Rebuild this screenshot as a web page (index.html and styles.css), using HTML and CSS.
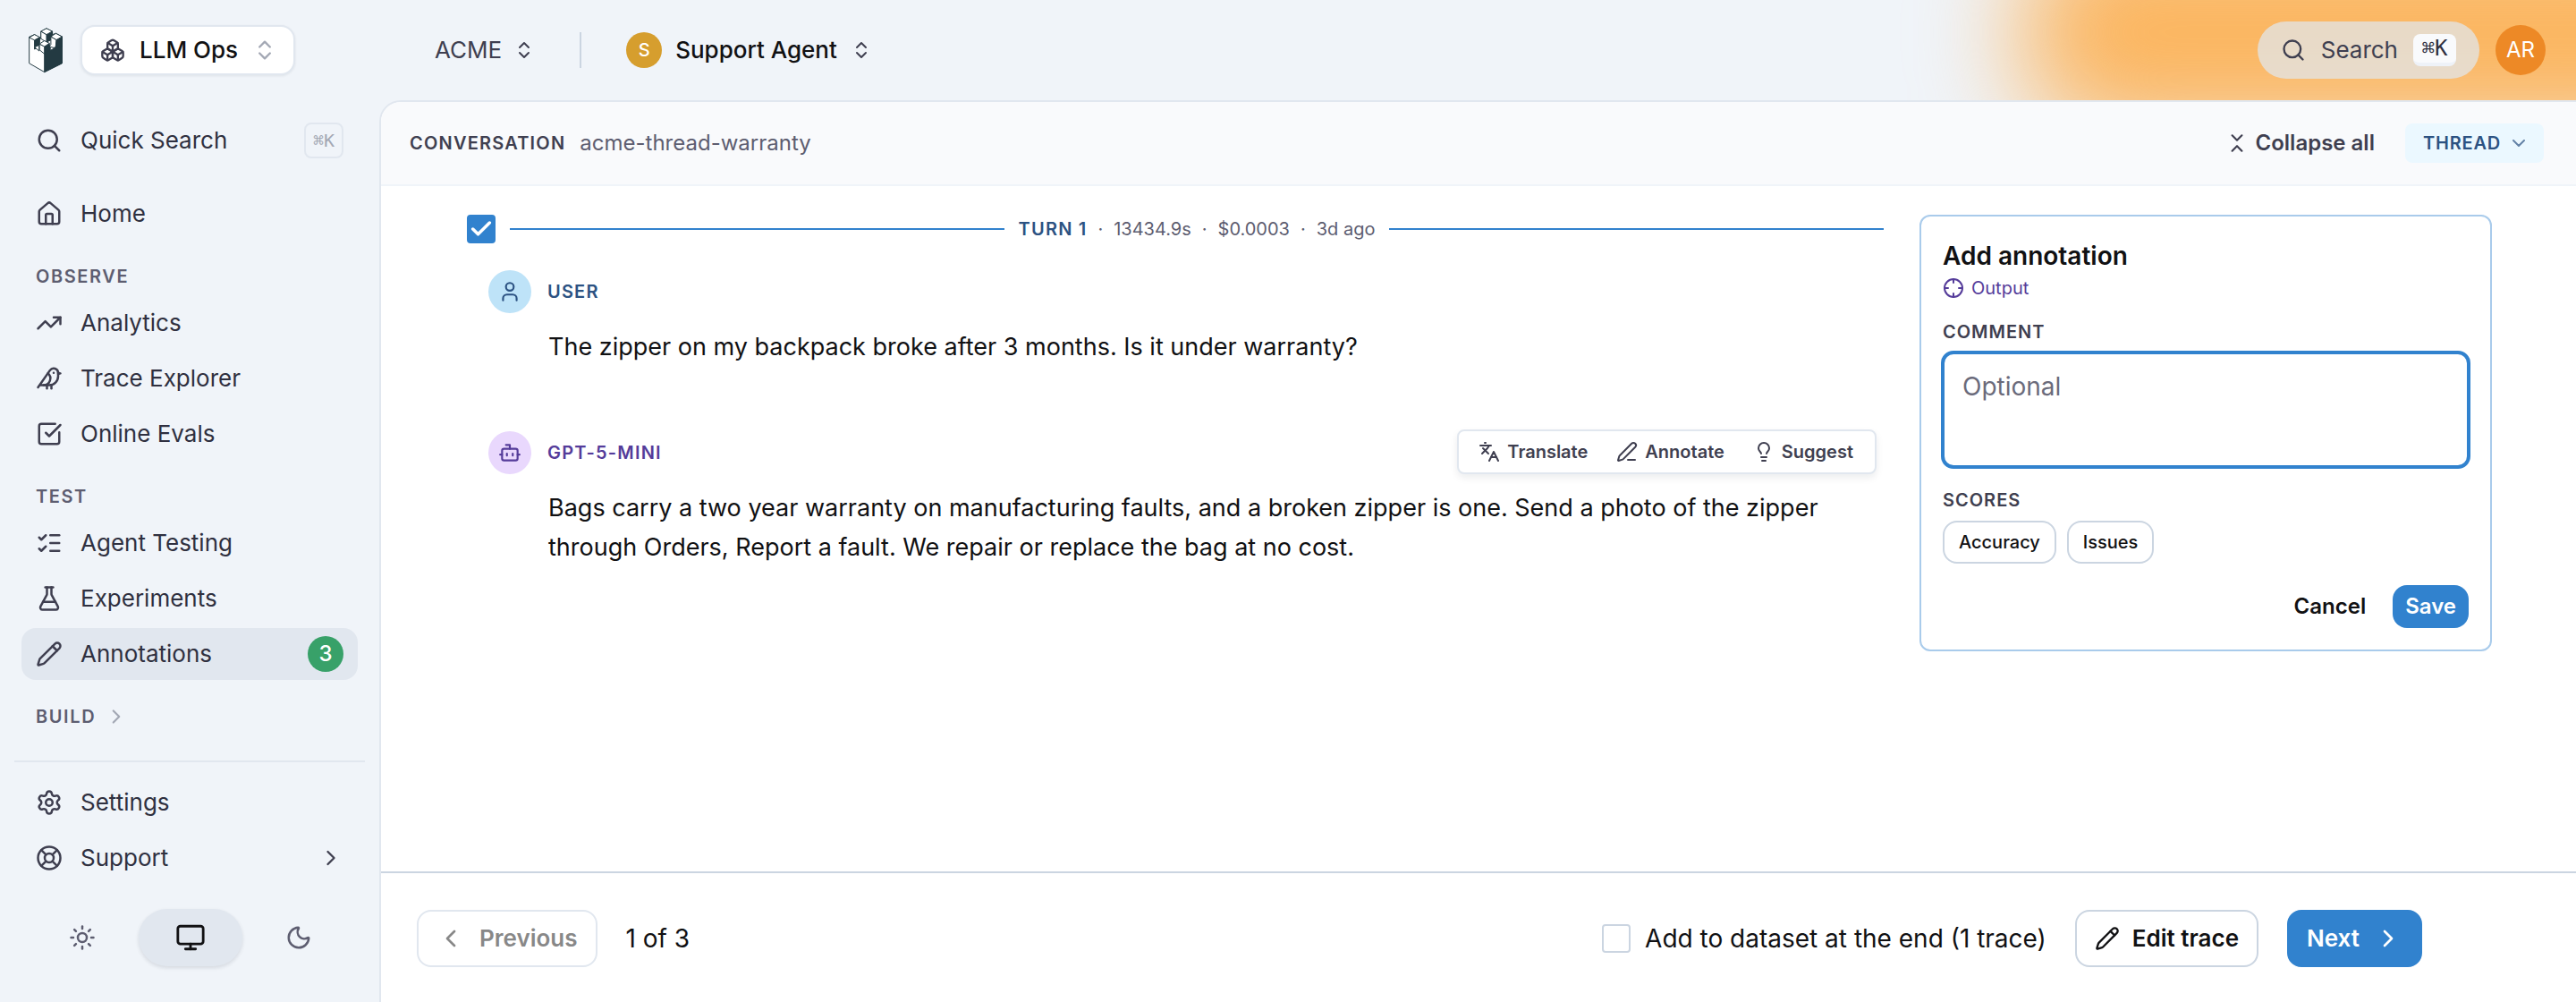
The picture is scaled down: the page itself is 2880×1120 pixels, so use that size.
FILE: index.html
```html
<!DOCTYPE html>
<html lang="en">
<head>
<meta charset="utf-8">
<meta name="viewport" content="width=device-width, initial-scale=1">
<title>Annotations · Support Agent</title>
<link rel="stylesheet" href="styles.css">
</head>
<body>
<svg class="sprite" aria-hidden="true">
  <symbol id="i-search" viewBox="0 0 24 24"><circle cx="11" cy="11" r="8"/><path d="m21 21-4.34-4.34"/></symbol>
  <symbol id="i-home" viewBox="0 0 24 24"><path d="M15 21v-8a1 1 0 0 0-1-1h-4a1 1 0 0 0-1 1v8"/><path d="M3 10a2 2 0 0 1 .709-1.528l7-5.999a2 2 0 0 1 2.582 0l7 5.999A2 2 0 0 1 21 10v9a2 2 0 0 1-2 2H5a2 2 0 0 1-2-2z"/></symbol>
  <symbol id="i-trend" viewBox="0 0 24 24"><path d="M16 7h6v6"/><path d="m22 7-8.5 8.5-5-5L2 17"/></symbol>
  <symbol id="i-bird" viewBox="0 0 24 24"><path d="M16 7h.01"/><path d="M3.4 18H12a8 8 0 0 0 8-8V7a4 4 0 0 0-7.28-2.3L2 20"/><path d="m20 7 2 .5-2 .5"/><path d="M10 18v3"/><path d="M14 17.75V21"/><path d="M7 18a6 6 0 0 0 3.84-10.61"/></symbol>
  <symbol id="i-check-square" viewBox="0 0 24 24"><path d="M21 10.656V19a2 2 0 0 1-2 2H5a2 2 0 0 1-2-2V5a2 2 0 0 1 2-2h12.344"/><path d="m9 11 3 3L22 4"/></symbol>
  <symbol id="i-list-checks" viewBox="0 0 24 24"><path d="M13 5h8"/><path d="M13 12h8"/><path d="M13 19h8"/><path d="m3 17 2 2 4-4"/><path d="m3 7 2 2 4-4"/></symbol>
  <symbol id="i-flask" viewBox="0 0 24 24"><path d="M14 2v6a2 2 0 0 0 .245.96l5.51 10.08A2 2 0 0 1 18 22H6a2 2 0 0 1-1.755-2.96l5.51-10.08A2 2 0 0 0 10 8V2"/><path d="M6.453 15h11.094"/><path d="M8.5 2h7"/></symbol>
  <symbol id="i-pencil" viewBox="0 0 24 24"><path d="M21.174 6.812a1 1 0 0 0-3.986-3.987L3.842 16.174a2 2 0 0 0-.5.83l-1.321 4.352a.5.5 0 0 0 .623.622l4.353-1.32a2 2 0 0 0 .83-.497z"/><path d="m15 5 4 4"/></symbol>
  <symbol id="i-pencil-line" viewBox="0 0 24 24"><path d="M13 21h8"/><path d="M21.174 6.812a1 1 0 0 0-3.986-3.987L3.842 16.174a2 2 0 0 0-.5.83l-1.321 4.352a.5.5 0 0 0 .623.622l4.353-1.32a2 2 0 0 0 .83-.497z"/></symbol>
  <symbol id="i-settings" viewBox="0 0 24 24"><path d="M9.671 4.136a2.34 2.34 0 0 1 4.659 0 2.34 2.34 0 0 0 3.319 1.915 2.34 2.34 0 0 1 2.33 4.033 2.34 2.34 0 0 0 0 3.831 2.34 2.34 0 0 1-2.33 4.033 2.34 2.34 0 0 0-3.319 1.915 2.34 2.34 0 0 1-4.659 0 2.34 2.34 0 0 0-3.32-1.915 2.34 2.34 0 0 1-2.33-4.033 2.34 2.34 0 0 0 0-3.831A2.34 2.34 0 0 1 6.35 6.051a2.34 2.34 0 0 0 3.319-1.915"/><circle cx="12" cy="12" r="3"/></symbol>
  <symbol id="i-buoy" viewBox="0 0 24 24"><circle cx="12" cy="12" r="10"/><path d="m4.93 4.93 4.24 4.24"/><path d="m14.83 9.17 4.24-4.24"/><path d="m14.83 14.83 4.24 4.24"/><path d="m9.17 14.83-4.24 4.24"/><circle cx="12" cy="12" r="4"/></symbol>
  <symbol id="i-sun" viewBox="0 0 24 24"><circle cx="12" cy="12" r="4"/><path d="M12 2v2"/><path d="M12 20v2"/><path d="m4.93 4.93 1.41 1.41"/><path d="m17.66 17.66 1.41 1.41"/><path d="M2 12h2"/><path d="M20 12h2"/><path d="m6.34 17.66-1.41 1.41"/><path d="m19.07 4.93-1.41 1.41"/></symbol>
  <symbol id="i-monitor" viewBox="0 0 24 24"><rect width="20" height="14" x="2" y="3" rx="2"/><path d="M8 21h8"/><path d="M12 17v4"/></symbol>
  <symbol id="i-moon" viewBox="0 0 24 24"><path d="M20.985 12.486a9 9 0 1 1-9.473-9.472c.405-.022.617.46.402.803a6 6 0 0 0 8.268 8.268c.344-.215.825-.004.803.401"/></symbol>
  <symbol id="i-boxes" viewBox="0 0 24 24"><path d="M2.97 12.92A2 2 0 0 0 2 14.63v3.24a2 2 0 0 0 .97 1.71l3 1.8a2 2 0 0 0 2.06 0L12 19v-5.5l-5-3-4.03 2.42Z"/><path d="m7 16.5-4.74-2.85"/><path d="m7 16.5 5-3"/><path d="M7 16.5v5.17"/><path d="M12 13.5V19l3.97 2.38a2 2 0 0 0 2.06 0l3-1.8a2 2 0 0 0 .97-1.71v-3.24a2 2 0 0 0-.97-1.71L17 10.5l-5 3Z"/><path d="m17 16.5-5-3"/><path d="m17 16.5 4.74-2.85"/><path d="M17 16.5v5.17"/><path d="M7.97 4.42A2 2 0 0 0 7 6.13v4.37l5 3 5-3V6.13a2 2 0 0 0-.97-1.71l-3-1.8a2 2 0 0 0-2.06 0l-3 1.8Z"/><path d="M12 8 7.26 5.15"/><path d="m12 8 4.74-2.85"/><path d="M12 13.5V8"/></symbol>
  <symbol id="i-up-down" viewBox="0 0 24 24"><path d="m7 15 5 5 5-5"/><path d="m7 9 5-5 5 5"/></symbol>
  <symbol id="i-down-up" viewBox="0 0 24 24"><path d="m7 20 5-5 5 5"/><path d="m7 4 5 5 5-5"/></symbol>
  <symbol id="i-right" viewBox="0 0 24 24"><path d="m9 18 6-6-6-6"/></symbol>
  <symbol id="i-left" viewBox="0 0 24 24"><path d="m15 18-6-6 6-6"/></symbol>
  <symbol id="i-down" viewBox="0 0 24 24"><path d="m6 9 6 6 6-6"/></symbol>
  <symbol id="i-user" viewBox="0 0 24 24"><path d="M19 21v-2a4 4 0 0 0-4-4H9a4 4 0 0 0-4 4v2"/><circle cx="12" cy="7" r="4"/></symbol>
  <symbol id="i-bot" viewBox="0 0 24 24"><path d="M12 8V4H8"/><rect width="16" height="12" x="4" y="8" rx="2"/><path d="M2 14h2"/><path d="M20 14h2"/><path d="M15 13v2"/><path d="M9 13v2"/></symbol>
  <symbol id="i-languages" viewBox="0 0 24 24"><path d="m5 8 6 6"/><path d="m4 14 6-6 2-3"/><path d="M2 5h12"/><path d="M7 2h1"/><path d="m22 22-5-10-5 10"/><path d="M14 18h6"/></symbol>
  <symbol id="i-bulb" viewBox="0 0 24 24"><path d="M15 14c.2-1 .7-1.7 1.5-2.5 1-.9 1.5-2.2 1.5-3.5A6 6 0 0 0 6 8c0 1 .2 2.2 1.5 3.5.7.7 1.3 1.5 1.5 2.5"/><path d="M9 18h6"/><path d="M10 22h4"/></symbol>
  <symbol id="i-crosshair" viewBox="0 0 24 24"><circle cx="12" cy="12" r="10"/><path d="M22 12h-4"/><path d="M6 12H2"/><path d="M12 6V2"/><path d="M12 22v-4"/></symbol>
  <symbol id="i-tick" viewBox="0 0 24 24"><path d="m4 12 5 5L20 6"/></symbol>
</svg>

<div class="app">
  <aside class="sidebar">
    <div class="brand">
      <a href="#" class="logo" aria-label="Dashboard">
        <svg viewBox="0 0 116 154" width="38" height="52">
          <path class="stone" d="M2 32 20 24 42 38V14L61 3 81 14V24L93 20 114 31V122L54 152 2 122Z"/>
          <path class="shade" d="M54 72 114 38V122L54 152Z"/>
          <path class="shade" d="M61 24 81 13V40L61 50Z"/>
          <path class="stone" d="M42 13V38L61 50V24Z"/>
          <path class="stone" d="M61 3 81 13 61 24 42 13Z"/>
          <path class="shade" d="M20 43 38 33V46L37 66 20 74Z"/>
          <path class="stone" d="M20 24 38 33 20 43 2 34Z"/>
          <path class="stone" d="M20 67 36 60V80Z"/>
          <path class="stone" d="M76 31 95 42 93 66 74 76 72 62 76 58Z"/>
          <path class="shade" d="M95 42 114 31V66L92 68Z"/>
          <path class="stone" d="M93 20 114 31 95 42 76 31Z"/>
          <path class="shade" d="M54 64 71 54V74L54 90Z"/>
          <path class="stone" d="M37 56V76L54 90V64Z"/>
          <path class="stone" d="M54 45 71 54 54 65 37 56Z"/>
          <path class="stone" d="M74 66 90 70 74 78Z"/>
        </svg>
      </a>
      <button type="button" class="product">
        <svg class="icon s28"><use href="#i-boxes"/></svg>
        <span>LLM Ops</span>
        <svg class="icon s28 faint"><use href="#i-up-down"/></svg>
      </button>
    </div>

    <button type="button" class="nav-item quick">
      <svg class="icon s30"><use href="#i-search"/></svg>Quick Search<kbd class="key outline">⌘K</kbd>
    </button>

    <nav class="nav" aria-label="Main">
      <a href="#" class="nav-item"><svg class="icon s30"><use href="#i-home"/></svg>Home</a>
      <h2 class="nav-label">Observe</h2>
      <a href="#" class="nav-item"><svg class="icon s30"><use href="#i-trend"/></svg>Analytics</a>
      <a href="#" class="nav-item"><svg class="icon s30"><use href="#i-bird"/></svg>Trace Explorer</a>
      <a href="#" class="nav-item"><svg class="icon s30"><use href="#i-check-square"/></svg>Online Evals</a>
      <h2 class="nav-label">Test</h2>
      <a href="#" class="nav-item"><svg class="icon s30"><use href="#i-list-checks"/></svg>Agent Testing</a>
      <a href="#" class="nav-item"><svg class="icon s30"><use href="#i-flask"/></svg>Experiments</a>
      <a href="#" class="nav-item active" aria-current="page"><svg class="icon s30"><use href="#i-pencil"/></svg>Annotations<span class="count">3</span></a>
      <button type="button" class="nav-label">Build<svg class="icon s26 faint"><use href="#i-right"/></svg></button>
    </nav>

    <div class="side-foot">
      <a href="#" class="nav-item"><svg class="icon s30"><use href="#i-settings"/></svg>Settings</a>
      <button type="button" class="nav-item"><svg class="icon s30"><use href="#i-buoy"/></svg>Support<svg class="icon s28 end"><use href="#i-right"/></svg></button>
    </div>
    <div class="themes" role="group" aria-label="Theme">
      <button type="button" aria-label="Light"><svg class="icon s30"><use href="#i-sun"/></svg></button>
      <button type="button" class="on" aria-label="System"><svg class="icon s34"><use href="#i-monitor"/></svg></button>
      <button type="button" aria-label="Dark"><svg class="icon s30"><use href="#i-moon"/></svg></button>
    </div>
  </aside>

  <header class="topbar">
    <div class="glow"></div>
    <button type="button" class="crumb">ACME<svg class="icon s24"><use href="#i-up-down"/></svg></button>
    <span class="divider"></span>
    <button type="button" class="crumb project"><span class="initial">S</span>Support Agent<svg class="icon s24"><use href="#i-up-down"/></svg></button>
    <button type="button" class="search"><svg class="icon s28"><use href="#i-search"/></svg>Search<kbd class="key solid">⌘K</kbd></button>
    <button type="button" class="account">AR</button>
  </header>

  <main class="panel">
    <header class="panel-head">
      <h1>Conversation</h1>
      <span class="thread-id">acme-thread-warranty</span>
      <button type="button" class="collapse"><svg class="icon s26"><use href="#i-down-up"/></svg>Collapse all</button>
      <button type="button" class="view">Thread<svg class="icon s24"><use href="#i-down"/></svg></button>
    </header>

    <div class="content">
      <section class="turn">
        <div class="turn-head">
          <label class="check" aria-label="Select turn 1"><input type="checkbox" checked><svg class="icon s28"><use href="#i-tick"/></svg></label>
          <span class="rule"></span>
          <p class="turn-meta"><strong>TURN 1</strong><span>·</span><span>13434.9s</span><span>·</span><span>$0.0003</span><span>·</span><span>3d ago</span></p>
          <span class="rule"></span>
        </div>

        <article class="message user">
          <div class="message-head">
            <span class="avatar"><svg class="icon s26"><use href="#i-user"/></svg></span>
            <h3>USER</h3>
          </div>
          <p>The zipper on my backpack broke after 3 months. Is it under warranty?</p>
        </article>

        <article class="message bot">
          <div class="message-head">
            <span class="avatar"><svg class="icon s26"><use href="#i-bot"/></svg></span>
            <h3>GPT-5-MINI</h3>
            <div class="tools">
              <button type="button"><svg class="icon s24"><use href="#i-languages"/></svg>Translate</button>
              <button type="button"><svg class="icon s24"><use href="#i-pencil-line"/></svg>Annotate</button>
              <button type="button"><svg class="icon s24"><use href="#i-bulb"/></svg>Suggest</button>
            </div>
          </div>
          <p>Bags carry a two year warranty on manufacturing faults, and a broken zipper is one. Send a photo of the zipper through Orders, Report a fault. We repair or replace the bag at no cost.</p>
        </article>
      </section>

      <form class="card">
        <h2>Add annotation</h2>
        <p class="target"><svg class="icon s24"><use href="#i-crosshair"/></svg>Output</p>
        <label class="field-label" for="comment">COMMENT</label>
        <textarea id="comment" placeholder="Optional"></textarea>
        <h3 class="field-label scores">SCORES</h3>
        <div class="chips">
          <button type="button">Accuracy</button>
          <button type="button">Issues</button>
        </div>
        <div class="actions">
          <button type="button" class="cancel">Cancel</button>
          <button type="submit" class="save">Save</button>
        </div>
      </form>
    </div>

    <footer class="pager">
      <button type="button" class="btn previous" disabled><svg class="icon s32"><use href="#i-left"/></svg>Previous</button>
      <span class="position">1 of 3</span>
      <label class="dataset"><input type="checkbox">Add to dataset at the end (1 trace)</label>
      <button type="button" class="btn edit"><svg class="icon s28"><use href="#i-pencil"/></svg>Edit trace</button>
      <button type="button" class="btn next">Next<svg class="icon s32"><use href="#i-right"/></svg></button>
    </footer>
  </main>
</div>
</body>
</html>
```
FILE: styles.css
```css
:root {
  --page: #f0f4f9;
  --subtle: #f9fafc;
  --line: #e1e7ef;
  --line-strong: #cbd5e1;
  --ink: #111113;
  --text: #2f3040;
  --icon: #3f3f50;
  --muted: #5d5d70;
  --faint: #a3a8b4;
  --blue: #3182ce;
  --navy: #2c5282;
  --purple: #553c9a;
}

* { box-sizing: border-box; }

body {
  margin: 0;
  background: var(--page);
  color: var(--ink);
  font: 400 26px/40px Inter, "Liberation Sans", sans-serif;
}

h1, h2, h3, p { margin: 0; font: inherit; }

button, textarea, kbd { font: inherit; color: inherit; }

button {
  display: flex;
  align-items: center;
  margin: 0;
  padding: 0;
  border: 0;
  background: none;
}

a { color: inherit; text-decoration: none; }

.sprite { display: none; }

.icon {
  flex: none;
  fill: none;
  stroke: currentColor;
  stroke-width: 2;
  stroke-linecap: round;
  stroke-linejoin: round;
}
.s24 { width: 24px; height: 24px; }
.s26 { width: 26px; height: 26px; }
.s28 { width: 28px; height: 28px; }
.s30 { width: 30px; height: 30px; }
.s32 { width: 32px; height: 32px; }
.s34 { width: 34px; height: 34px; }
.faint { color: var(--faint); }

.app {
  display: grid;
  grid-template: 112px 1fr / 424px minmax(0, 1fr);
  min-height: 100vh;
}

/* Sidebar */

.sidebar {
  grid-row: 1 / -1;
  display: flex;
  flex-direction: column;
  padding-bottom: 40px;
}

.brand {
  display: flex;
  align-items: center;
  gap: 20px;
  height: 112px;
  padding-left: 32px;
}

.logo { display: flex; }
.stone { fill: #fff; }
.shade { fill: #233a42; }
.stone, .shade {
  stroke: #233a42;
  stroke-width: 3;
  stroke-linejoin: round;
}

.product {
  gap: 16px;
  height: 56px;
  padding: 0 18px 0 20px;
  border: 2px solid var(--line);
  border-radius: 16px;
  background: #fff;
  box-shadow: 0 1px 3px #0f172a14;
  font-weight: 500;
}
.product .icon:first-child { color: var(--icon); }

.nav-item {
  display: flex;
  align-items: center;
  gap: 20px;
  height: 58px;
  padding: 0 16px;
  border-radius: 16px;
  color: var(--text);
}
.nav-item .icon { color: var(--icon); }
.quick { margin: 16px 24px 24px; }

.nav {
  flex: 1;
  display: flex;
  flex-direction: column;
  padding: 0 24px;
}
.nav-item + .nav-item { margin-top: 4px; }

.active { background: var(--line); }

.count {
  display: grid;
  place-items: center;
  width: 40px;
  height: 40px;
  margin-left: auto;
  border-radius: 50%;
  background: #38a169;
  color: #fff;
  font-size: 24px;
  font-weight: 500;
}

.nav-label {
  display: flex;
  align-items: center;
  gap: 10px;
  padding: 28px 16px 10px;
  color: var(--muted);
  font-size: 20px;
  font-weight: 600;
  line-height: 26px;
  letter-spacing: 0.08em;
  text-transform: uppercase;
}

.key {
  display: grid;
  place-items: center;
  font-family: "DejaVu Sans Mono", monospace;
  line-height: 24px;
}
.outline {
  width: 44px;
  height: 40px;
  margin-left: auto;
  border: 2px solid var(--line);
  border-radius: 8px;
  color: var(--faint);
  font-size: 20px;
}
.solid {
  width: 48px;
  height: 36px;
  border-bottom: 4px solid #eef2f8;
  border-radius: 8px;
  background: var(--subtle);
  color: var(--text);
  font-size: 24px;
}

.side-foot {
  display: flex;
  flex-direction: column;
  margin: 0 16px;
  padding: 16px 8px 0;
  border-top: 2px solid var(--line);
}
.end { margin-left: auto; }

.themes {
  display: grid;
  grid-template-columns: repeat(3, 1fr);
  gap: 4px;
  margin: 28px 32px 0 34px;
}
.themes button {
  justify-content: center;
  height: 64px;
  border-radius: 32px;
  color: var(--muted);
}
.themes .on {
  background: var(--line);
  box-shadow: 0 2px 4px #0f172a1f;
  color: var(--ink);
}

/* Top bar */

.topbar {
  position: relative;
  display: flex;
  align-items: center;
  padding: 0 34px 0 62px;
  overflow: hidden;
}
.topbar > * { position: relative; }
.topbar > .glow {
  position: absolute;
  top: -80px;
  right: -200px;
  width: 820px;
  height: 232px;
  border-radius: 100px;
  background: #fbb55f;
  filter: blur(58px);
}

.crumb { gap: 13px; color: var(--icon); }
.crumb.project { gap: 15px; color: var(--ink); font-weight: 500; }
.crumb .icon { color: var(--icon); }

.divider {
  width: 2px;
  height: 40px;
  margin: 0 50px;
  background: var(--line-strong);
}

.initial {
  display: grid;
  place-items: center;
  width: 40px;
  height: 40px;
  border-radius: 50%;
  background: #d69e2e;
  color: #fff;
  font-size: 20px;
}

.search {
  gap: 17px;
  height: 64px;
  margin-left: auto;
  padding: 0 26px;
  border-radius: 32px;
  background: #e1e7efb8;
  color: var(--icon);
}

.account {
  justify-content: center;
  width: 56px;
  height: 56px;
  margin-left: 18px;
  border-radius: 50%;
  background: #ed8926;
  color: #fff;
  font-size: 24px;
}

/* Panel */

.panel {
  display: flex;
  flex-direction: column;
  border: solid var(--line);
  border-width: 2px 0 0 2px;
  border-top-left-radius: 24px;
  background: #fff;
  overflow: hidden;
}

.panel-head {
  display: flex;
  align-items: center;
  height: 94px;
  padding: 0 36px 0 32px;
  border-bottom: 2px solid var(--page);
  background: var(--subtle);
}
.panel-head h1 {
  margin-right: 16px;
  color: var(--icon);
  font-size: 20px;
  font-weight: 600;
  letter-spacing: 0.06em;
  text-transform: uppercase;
}
.thread-id { color: var(--muted); font-size: 24px; }

.collapse {
  gap: 8px;
  margin-left: auto;
  color: var(--icon);
  font-size: 24px;
  font-weight: 600;
}
.view {
  gap: 8px;
  height: 44px;
  margin-left: 34px;
  padding: 0 16px 0 20px;
  border-radius: 8px;
  background: #ebf8ff;
  color: var(--navy);
  font-size: 20px;
  font-weight: 600;
  letter-spacing: 0.04em;
  text-transform: uppercase;
}
.view .icon { opacity: 0.7; }

.content {
  flex: 1;
  display: grid;
  grid-template-columns: minmax(0, 1fr) 640px;
  align-items: start;
  gap: 40px;
  padding: 32px 94px 32px 96px;
}

.turn-head {
  display: flex;
  align-items: center;
  gap: 16px;
  height: 32px;
}
.rule { flex: 1; height: 2px; background: var(--blue); }
.turn-meta {
  display: flex;
  gap: 12px;
  color: var(--muted);
  font-size: 20px;
}
.turn-meta strong { color: var(--navy); font-weight: 600; letter-spacing: 0.06em; }

input[type="checkbox"] {
  appearance: none;
  flex: none;
  width: 32px;
  height: 32px;
  margin: 0;
  border: 2px solid var(--line-strong);
  border-radius: 4px;
  background: #fff;
}
input[type="checkbox"]:checked { border-color: var(--blue); background: var(--blue); }

.check { display: grid; place-items: center; }
.check > * { grid-area: 1 / 1; }
.check .icon { z-index: 1; color: #fff; stroke-width: 3; pointer-events: none; }

.message { margin-top: 30px; padding-left: 24px; }
.message-head {
  display: flex;
  align-items: center;
  gap: 18px;
  height: 48px;
}
.avatar {
  display: grid;
  place-items: center;
  width: 48px;
  height: 48px;
  border-radius: 50%;
}
.message h3 {
  font-size: 20px;
  font-weight: 600;
  letter-spacing: 0.06em;
}
.user .avatar { background: #bee3f8; }
.user .avatar, .user h3 { color: var(--navy); }
.bot { margin-top: 72px; }
.bot .avatar { background: #e9d8fd; }
.bot .avatar, .bot h3 { color: var(--purple); }
.message p {
  margin-top: 16px;
  padding-left: 67px;
  font-size: 27px;
  line-height: 44px;
}

.tools {
  display: flex;
  gap: 32px;
  height: 50px;
  margin: 0 8px 2px auto;
  padding: 0 24px 0 22px;
  border: 2px solid var(--line);
  border-radius: 8px;
  background: #fff;
  box-shadow: 0 4px 8px #0f172a14;
}
.tools button {
  gap: 8px;
  color: var(--icon);
  font-size: 20px;
  font-weight: 600;
}

/* Annotation form */

.card {
  display: flex;
  flex-direction: column;
  padding: 24px;
  border: 2px solid #a9cbeb;
  border-radius: 12px;
}
.card h2 { font-size: 28px; font-weight: 600; }
.target {
  display: flex;
  align-items: center;
  gap: 8px;
  color: var(--purple);
  font-size: 20px;
  line-height: 32px;
}
.field-label {
  margin-top: 20px;
  color: var(--icon);
  font-size: 20px;
  font-weight: 600;
  line-height: 26px;
  letter-spacing: 0.05em;
}
textarea {
  height: 132px;
  margin: 8px -2px 0;
  padding: 16px 20px;
  border: 4px solid var(--blue);
  border-radius: 14px;
  outline: 0;
  background: #fff;
  font-size: 28px;
  resize: none;
}
textarea::placeholder { color: #6b6b7b; }
.scores { margin-top: 22px; }
.chips { display: flex; gap: 12px; margin-top: 10px; }
.chips button {
  height: 48px;
  padding: 0 16px;
  border: 2px solid var(--line-strong);
  border-radius: 16px;
  font-size: 20px;
  font-weight: 500;
}
.actions {
  display: flex;
  justify-content: flex-end;
  gap: 16px;
  margin-top: 24px;
}
.actions button {
  height: 48px;
  padding: 0 14px;
  border-radius: 16px;
  font-size: 24px;
  font-weight: 600;
}
.actions .save { background: var(--blue); color: #fff; }

/* Pager */

.pager {
  display: flex;
  align-items: center;
  gap: 32px;
  height: 146px;
  padding: 2px 172px 0 40px;
  border-top: 2px solid var(--line-strong);
}
.btn {
  gap: 16px;
  height: 64px;
  padding: 0 20px;
  border: 2px solid var(--line-strong);
  border-radius: 16px;
  font-weight: 600;
}
.previous { border-color: var(--line); color: #888; }
.position { font-size: 28px; }
.dataset {
  display: flex;
  align-items: center;
  gap: 16px;
  margin-left: auto;
  font-size: 28px;
}
.edit { gap: 14px; }
.next { gap: 16px; border-color: var(--blue); background: var(--blue); color: #fff; }
```
